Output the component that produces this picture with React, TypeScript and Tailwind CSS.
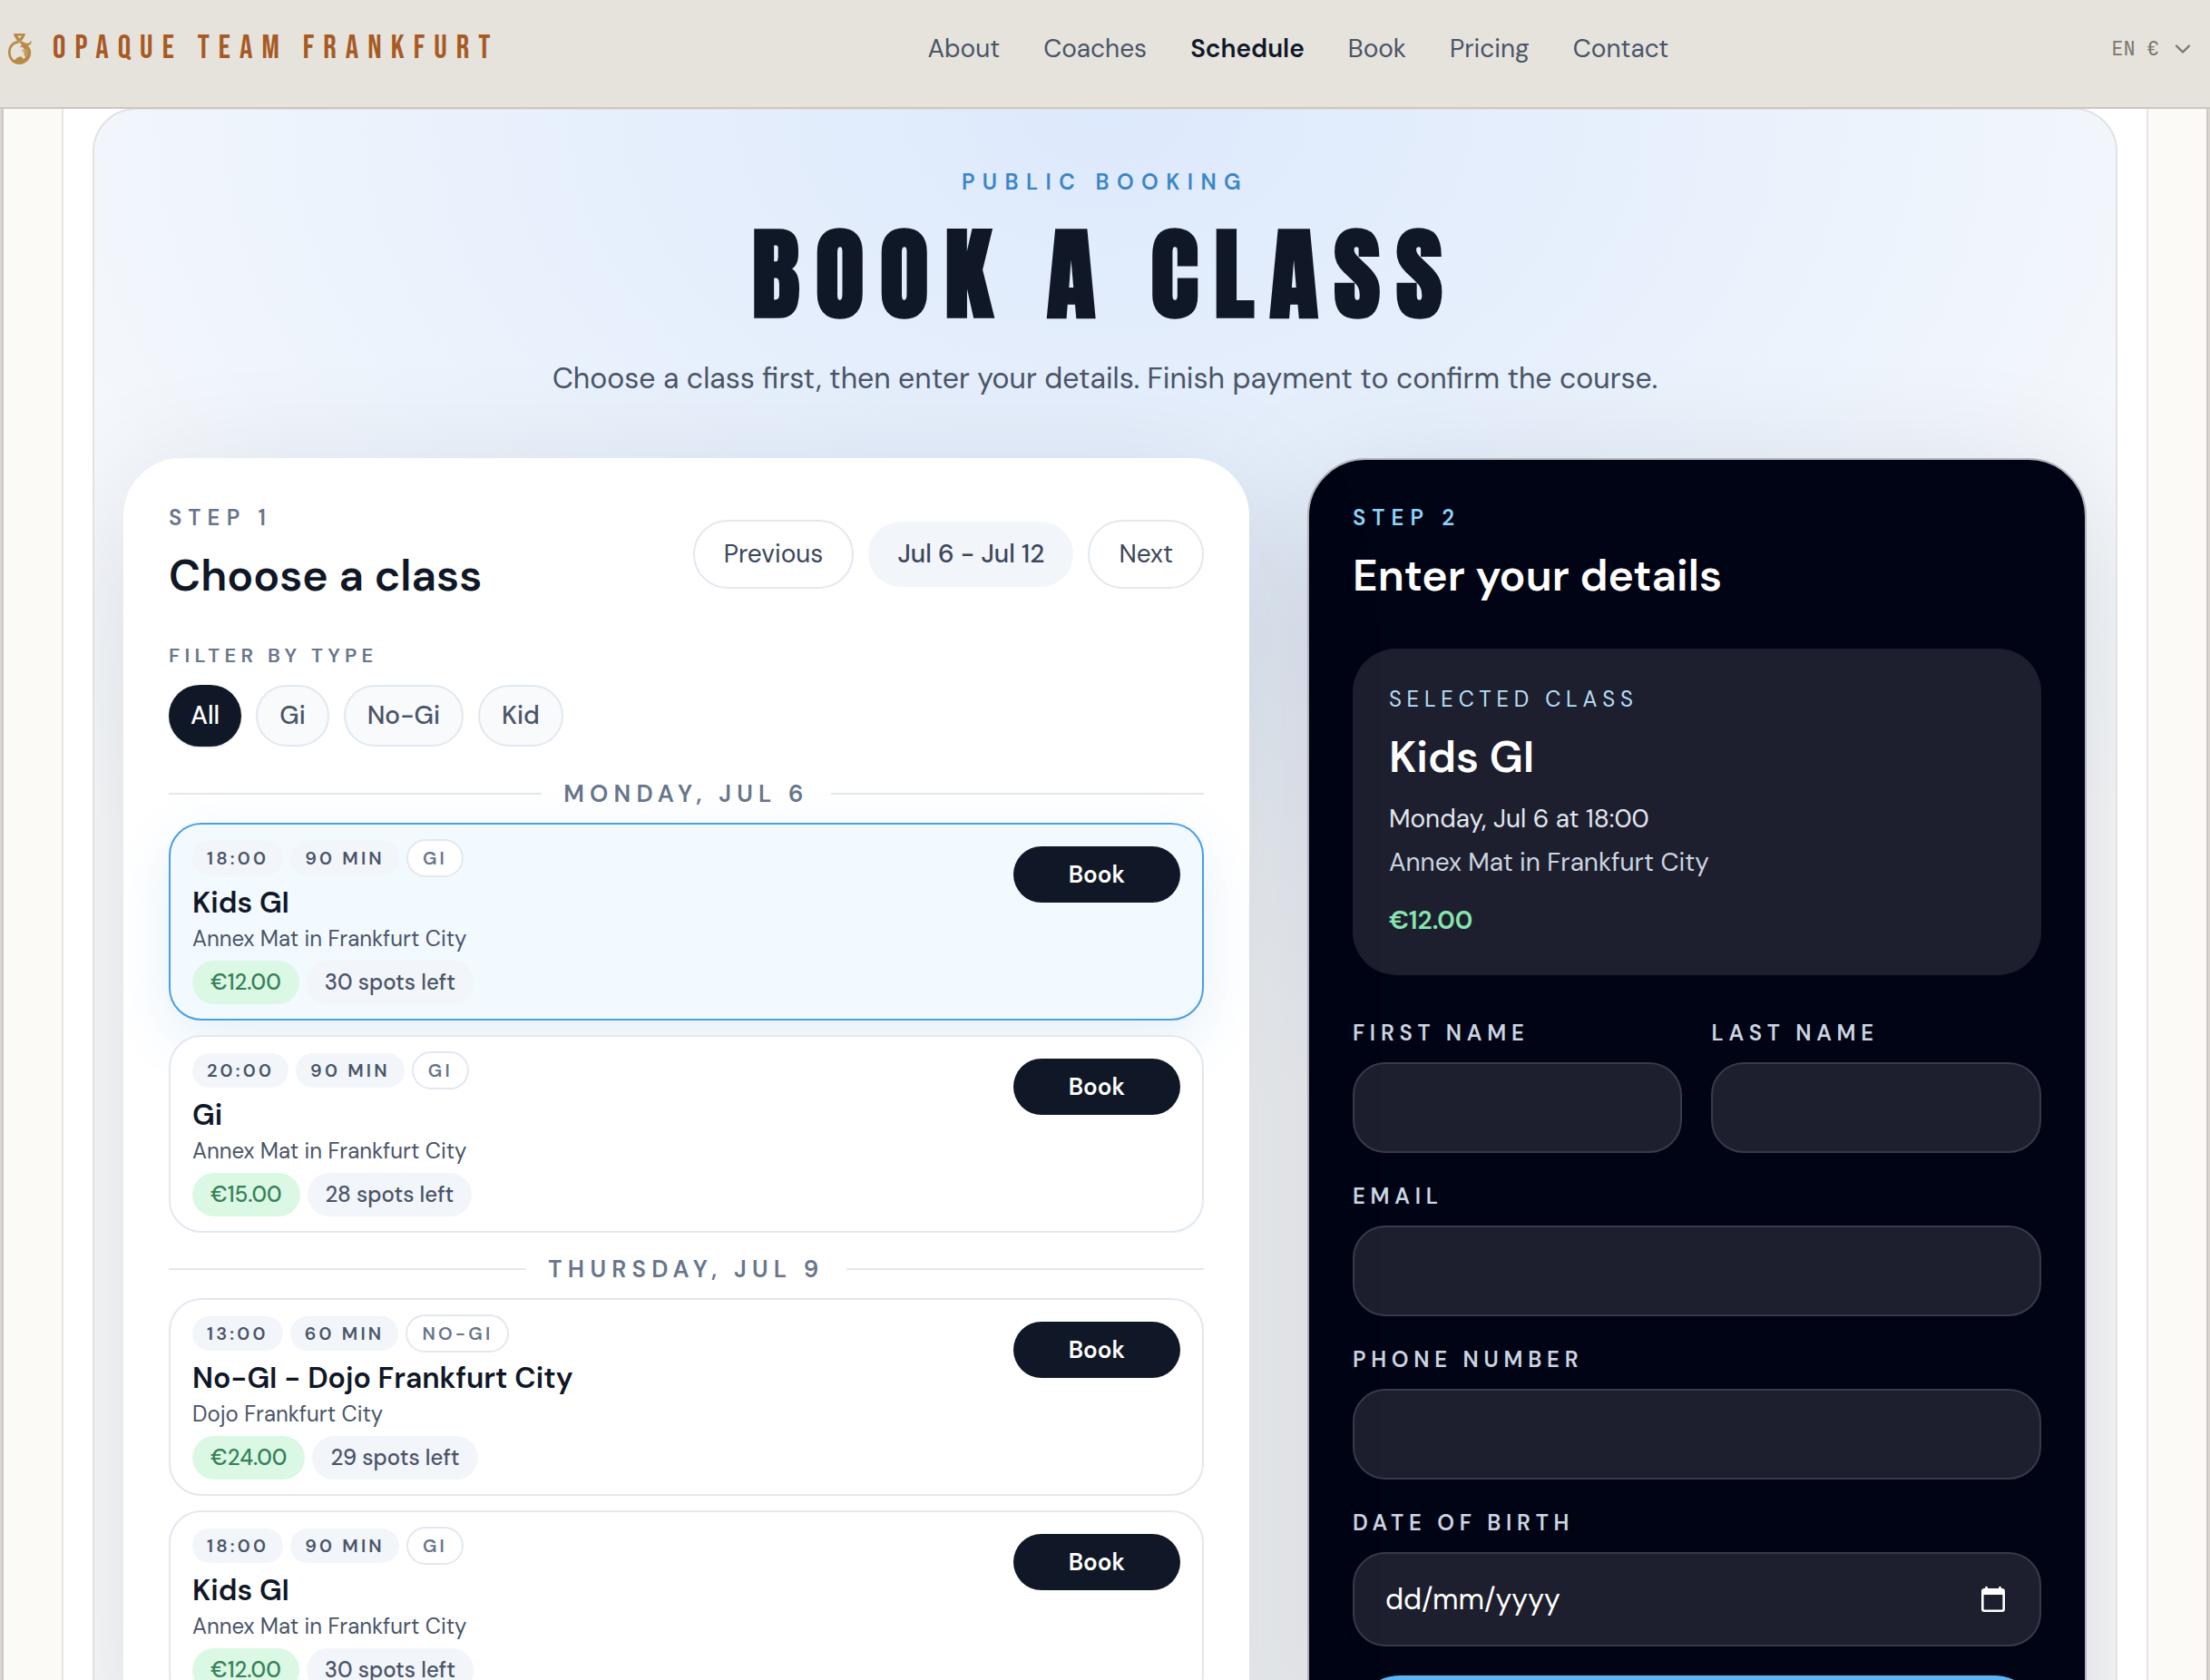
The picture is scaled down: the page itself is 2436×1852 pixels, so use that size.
import React, { useState } from 'react'
import { ChevronDown } from 'lucide-react'
import clsx from 'clsx'

interface ClassItem {
  id: number
  time: string
  duration: string
  type: string
  title: string
  location: string
  price: string
  spots: number
  when: string
}

interface ClassDay {
  label: string
  classes: ClassItem[]
}

const navItems = ['About', 'Coaches', 'Schedule', 'Book', 'Pricing', 'Contact']

const filters = ['All', 'Gi', 'No-Gi', 'Kid']

const days: ClassDay[] = [
  {
    label: 'Monday, Jul 6',
    classes: [
      { id: 1, time: '18:00', duration: '90 min', type: 'GI', title: 'Kids GI', location: 'Annex Mat in Frankfurt City', price: '€12.00', spots: 30, when: 'Monday, Jul 6 at 18:00' },
      { id: 2, time: '20:00', duration: '90 min', type: 'GI', title: 'Gi', location: 'Annex Mat in Frankfurt City', price: '€15.00', spots: 28, when: 'Monday, Jul 6 at 20:00' },
    ],
  },
  {
    label: 'Thursday, Jul 9',
    classes: [
      { id: 3, time: '13:00', duration: '60 min', type: 'No-Gi', title: 'No-GI - Dojo Frankfurt City', location: 'Dojo Frankfurt City', price: '€24.00', spots: 29, when: 'Thursday, Jul 9 at 13:00' },
      { id: 4, time: '18:00', duration: '90 min', type: 'GI', title: 'Kids GI', location: 'Annex Mat in Frankfurt City', price: '€12.00', spots: 30, when: 'Thursday, Jul 9 at 18:00' },
    ],
  },
]

function Logo() {
  return (
    <svg viewBox="0 0 28 36" className="h-9 w-7" fill="none" aria-hidden="true">
      <path d="M7 1h13l-1.200 3.600-3.200 5h-4.200l-3.400-5z" fill="#b98a45" />
      <path d="M11.200 3.400h4.800l-2.400 3z" fill="#e6e3dc" />
      <path d="M12.500 10.400C6 10.600 2.300 15.600 2.300 21.800c0 6.800 4.800 11.800 10.700 11.800 2.400 0 4.600-.7 6.400-2" stroke="#b98a45" strokeWidth="2.600" />
      <path d="M12 10c2-1 4.500-.6 6.200.5 2.400 1.400 4.600 1.600 6.400.6l1.400-2.200.8.8-1 3-3 1.800c2.800 2.400 3.700 5.600 3.300 9-.4 4-3 7.800-6.500 9.600-3 1.600-7.300 1.800-10.300.4l-2-2.600 4.300-4 3.800-.6 2.600 2.800 2.200-1.800-1.800-3.400.4-3.200-3.600-1.200 4-.8-2-2.400-3.800-.8 2.800-1.400-1.400-2.200z" fill="#b98a45" />
      <path d="M16 18.500l6.500 1.200M15.800 21.500l7 .2M17 24.500l5.500-.6" stroke="#dcc9a6" strokeWidth=".7" />
    </svg>
  )
}

function CalendarIcon() {
  return (
    <svg viewBox="0 0 26 28" className="h-7 w-[26px]" fill="none" aria-hidden="true">
      <path d="M5.500 0v4M20.500 0v4" stroke="#fff" strokeWidth="2.600" />
      <rect x="1.300" y="3.300" width="23.400" height="23.400" rx="2" stroke="#fff" strokeWidth="2.600" />
      <path d="M1 3h24v6H1z" fill="#fff" />
    </svg>
  )
}

function ClassCard({ item, selected, onSelect }: { item: ClassItem; selected: boolean; onSelect: () => void }) {
  return (
    <article
      className={clsx(
        'flex items-start justify-between rounded-[36px] border-2 px-6 py-4',
        selected
          ? 'border-[#4a9fe3] bg-[#f2f9ff] shadow-[0_20px_60px_rgba(56,150,220,0.14)]'
          : 'relative border-slate-200 bg-white'
      )}
    >
      <div>
        <div className="flex items-center gap-2 text-[20px] leading-[30px] font-semibold tracking-[0.16em] uppercase">
          <span className="rounded-full bg-[#f2f5fa] px-4 py-1 text-[#4a5568]">{item.time}</span>
          <span className="rounded-full bg-[#f2f5fa] px-4 py-1 text-[#4a5568]">{item.duration}</span>
          <span className="rounded-full border-2 border-slate-200 bg-white px-4 py-1 text-[#68758b]">{item.type}</span>
        </div>
        <h3 className="mt-2 text-[32px] leading-10 font-semibold text-[#101727]">{item.title}</h3>
        <p className="mt-1 text-[24px] leading-8 text-[#4a5568]">{item.location}</p>
        <div className="mt-2 flex gap-2 text-[24px] leading-8 font-medium">
          <span className="rounded-full bg-[#dbf8e4] px-5 py-2 text-[#35805a]">{item.price}</span>
          <span className="rounded-full bg-[#f2f5fa] px-5 py-2 text-[#4a5568]">{item.spots} spots left</span>
        </div>
      </div>
      <button
        type="button"
        onClick={onSelect}
        className="mt-2 w-46 rounded-full bg-[#101727] py-3 text-[26px] leading-[38px] font-semibold text-white"
      >
        Book
      </button>
    </article>
  )
}

function Field({ id, label }: { id: string; label: string }) {
  return (
    <div className="flex flex-col gap-4">
      <label htmlFor={id} className="text-[24px] leading-8 font-semibold tracking-[0.24em] text-[#cbd5e1] uppercase">
        {label}
      </label>
      <input
        id={id}
        type="text"
        className="h-25 w-full rounded-[36px] border-2 border-[#393a48] bg-[#1e1f2e] px-[34px] text-[32px] text-white"
      />
    </div>
  )
}

export default function App() {
  const [filter, setFilter] = useState('All')
  const [selectedId, setSelectedId] = useState(1)

  const selected = days.flatMap((day) => day.classes).find((item) => item.id === selectedId)!

  return (
    <div className="h-screen overflow-y-auto bg-[#dad6cf] font-['DM_Sans','Open_Sans',sans-serif] [scrollbar-width:none]">
      <header className="sticky top-0 z-20 flex h-30 items-center justify-between border-b-2 border-[#cdc8be] bg-[#e6e3dc] pr-4 pb-[10px] pl-2">
        <a href="#home" className="flex items-center gap-[22px]">
          <Logo />
          <span className="font-['Bebas_Neue','Anton',sans-serif] text-[36px] leading-9 tracking-[0.28em] text-[#a85a24]">
            OPAQUE TEAM FRANKFURT
          </span>
        </a>
        <nav className="flex gap-12 text-[28px] leading-10 text-[#4a5568]">
          {navItems.map((item) => (
            <a
              key={item}
              href={`#${item.toLowerCase()}`}
              className={item === 'Schedule' ? 'font-semibold text-[#101727]' : ''}
            >
              {item}
            </a>
          ))}
        </nav>
        <button
          type="button"
          className="flex items-center gap-3 pl-4 font-['JetBrains_Mono','Liberation_Mono',monospace] text-[22px] leading-8 text-[#7d766d]"
        >
          EN €
          <ChevronDown className="size-7" strokeWidth={2} />
        </button>
      </header>

      <div className="mx-[2px] border-x-2 border-[#cdc8c2] bg-[#fbfaf6] px-16">
        <main className="border-x-2 border-[#e5e5e5] bg-white px-8">
          <section className="-mt-px overflow-hidden rounded-t-[48px] border-2 border-[#e2e2e4] bg-[radial-gradient(ellipse_70%_1100px_at_top,#dde9fc_0%,#e7f0fc_40%,#f5f8fc_80%,#fafbfc_100%)] px-8 pt-16 pb-16">
            <div className="text-center">
              <p className="text-[24px] leading-8 font-semibold tracking-[0.35em] text-[#3b86c8] uppercase">Public booking</p>
              <h1 className="mt-5 font-['Impact','Anton',sans-serif] text-[110px] leading-[132px] font-bold tracking-[0.16em] text-[#101727] uppercase">
                Book a class
              </h1>
              <p className="mt-6 text-[32px] leading-12 text-[#4a5568]">
                Choose a class first, then enter your details. Finish payment to confirm the course.
              </p>
            </div>

            <div className="mt-16 grid grid-cols-[1.3fr_0.9fr] items-start gap-16">
              <section className="relative z-10 rounded-[64px] border-2 border-white bg-white p-12 shadow-[0_48px_160px_rgba(15,23,42,0.14)]">
                <div className="flex items-center justify-between">
                  <div>
                    <p className="text-[24px] leading-8 font-semibold tracking-[0.3em] text-[#68758b] uppercase">Step 1</p>
                    <h2 className="mt-4 text-[48px] leading-16 font-semibold text-[#101727]">Choose a class</h2>
                  </div>
                  <div className="flex items-center gap-4 text-[28px] leading-10 text-[#3b475a]">
                    <button type="button" className="rounded-full border-2 border-slate-200 px-8 py-4">
                      Previous
                    </button>
                    <span className="rounded-full bg-[#f2f5fa] px-8 py-4 font-medium">Jul 6 - Jul 12</span>
                    <button type="button" className="rounded-full border-2 border-slate-200 px-8 py-4">
                      Next
                    </button>
                  </div>
                </div>

                <p className="mt-10 text-[22px] leading-8 font-semibold tracking-[0.24em] text-[#68758b] uppercase">Filter by type</p>
                <div className="mt-4 flex gap-4 text-[28px] leading-10">
                  {filters.map((name) => (
                    <button
                      key={name}
                      type="button"
                      aria-pressed={filter === name}
                      onClick={() => setFilter(name)}
                      className={clsx(
                        'rounded-full px-6 py-3 font-medium',
                        filter === name
                          ? 'bg-[#101727] text-white shadow-sm'
                          : 'border-2 border-slate-200 bg-[#f8fafc] text-[#4a5568]'
                      )}
                    >
                      {name}
                    </button>
                  ))}
                </div>

                <div className="mt-9 flex flex-col gap-6">
                  {days.map((day) => (
                    <section key={day.label} className="flex flex-col gap-4">
                      <h3 className="flex items-center gap-6 text-[26px] leading-8 font-semibold tracking-[0.24em] text-[#68758b] uppercase before:h-[2px] before:flex-1 before:bg-slate-200 after:h-[2px] after:flex-1 after:bg-slate-200">
                        {day.label}
                      </h3>
                      {day.classes.map((item) => (
                        <ClassCard
                          key={item.id}
                          item={item}
                          selected={item.id === selectedId}
                          onSelect={() => setSelectedId(item.id)}
                        />
                      ))}
                    </section>
                  ))}
                </div>
              </section>

              <section className="rounded-[64px] border-2 border-[#b3b5ba] bg-[#010414] p-12 shadow-[0_48px_160px_rgba(15,23,42,0.16)]">
                <p className="text-[24px] leading-8 font-semibold tracking-[0.3em] text-[#8fd3f7] uppercase">Step 2</p>
                <h2 className="mt-4 text-[48px] leading-16 font-semibold text-white">Enter your details</h2>

                <div className="mt-12 rounded-[48px] bg-[#1e1f2e] p-10">
                  <p className="text-[24px] leading-8 tracking-[0.24em] text-[#b5dff5] uppercase">Selected class</p>
                  <p className="mt-4 text-[48px] leading-16 font-semibold text-white">{selected.title}</p>
                  <p className="mt-4 text-[28px] leading-10 text-[#e2e8f0]">{selected.when}</p>
                  <p className="mt-2 text-[28px] leading-10 text-[#cbd5e1]">{selected.location}</p>
                  <p className="mt-6 text-[28px] leading-10 font-semibold text-[#86e5b0]">{selected.price}</p>
                </div>

                <form className="mt-12 flex flex-col gap-8" onSubmit={(e) => e.preventDefault()}>
                  <div className="grid grid-cols-2 gap-8">
                    <Field id="first-name" label="First name" />
                    <Field id="last-name" label="Last name" />
                  </div>
                  <Field id="email" label="Email" />
                  <Field id="phone" label="Phone number" />
                  <div className="flex flex-col gap-4">
                    <label htmlFor="birth-date" className="text-[24px] leading-8 font-semibold tracking-[0.24em] text-[#cbd5e1] uppercase">
                      Date of birth
                    </label>
                    <div className="flex h-26 items-center rounded-[36px] border-2 border-[#393a48] bg-[#1e1f2e] pr-[38px] pl-[34px]">
                      <input
                        id="birth-date"
                        type="text"
                        placeholder="dd/mm/yyyy"
                        className="min-w-0 flex-1 bg-transparent text-[32px] text-white placeholder:text-white"
                      />
                      <CalendarIcon />
                    </div>
                  </div>
                  <button type="submit" className="rounded-full bg-[#5fb4f2] py-8 text-[28px] leading-10 font-semibold text-[#010414]">
                    Continue to payment
                  </button>
                </form>
              </section>
            </div>
          </section>
        </main>
      </div>
    </div>
  )
}
